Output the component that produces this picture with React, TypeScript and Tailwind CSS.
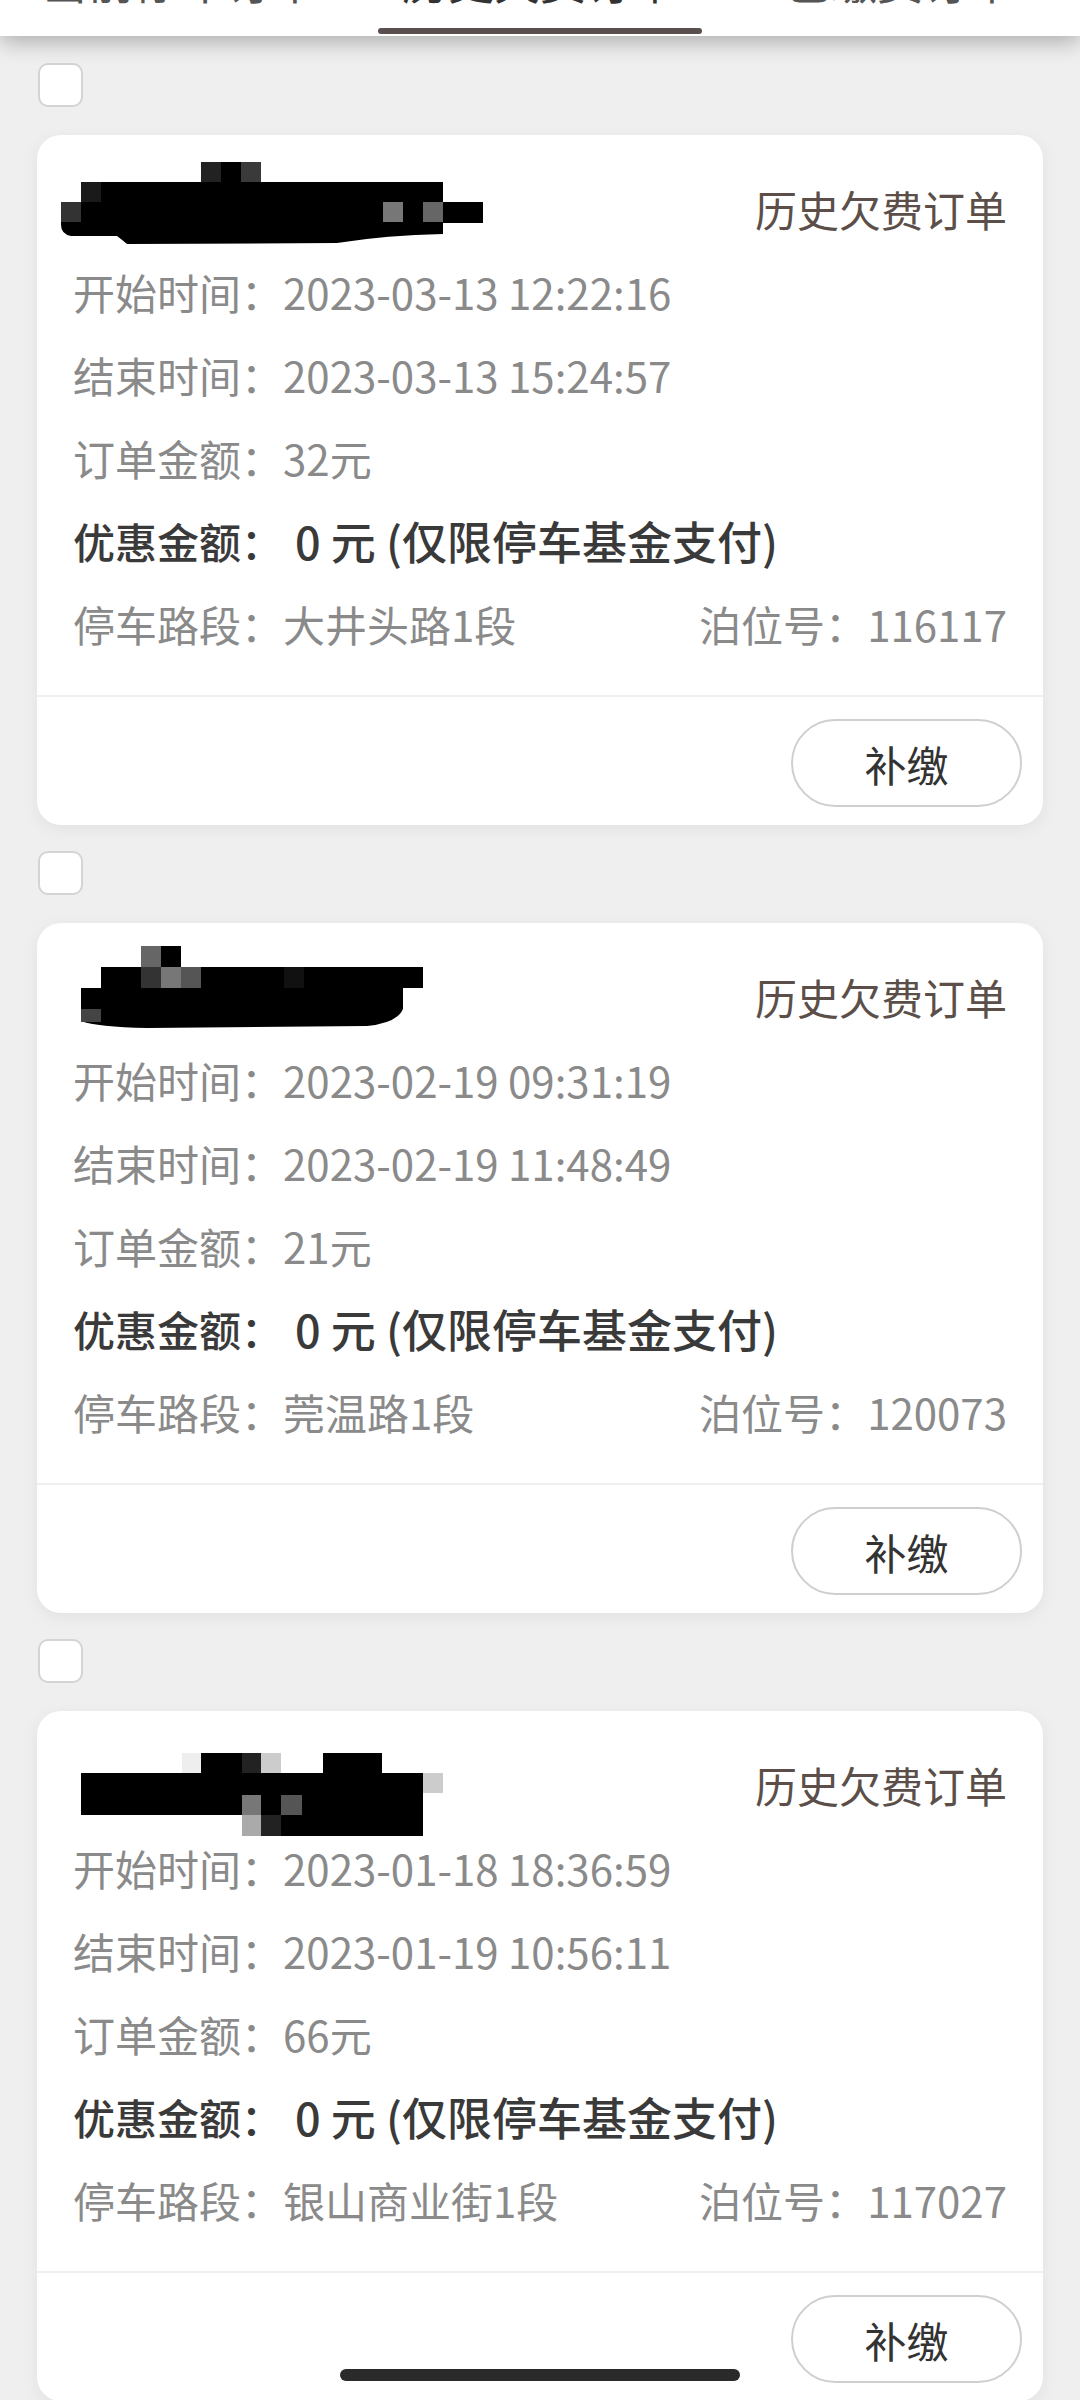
import type { ReactNode } from "react"

type Order = {
  start: string
  end: string
  amount: string
  road: string
  berth: string
  blob: ReactNode
}

const blobOne = (
  <>
    <rect x="164" y="27" width="20" height="20" fill="#222" />
    <rect x="184" y="27" width="20" height="20" fill="#000" />
    <rect x="204" y="27" width="20" height="20" fill="#3a3a3a" />
    <rect x="44" y="47" width="362" height="50" fill="#000" />
    <rect x="44" y="47" width="20" height="20" fill="#1a1a1a" />
    <rect x="24" y="67" width="20" height="20" fill="#333" />
    <path d="M24 87 H44 V97 H406 V99 Q350 100 300 108 L90 109 Q84 104 80 101 L34 101 Q24 99 24 90 Z" fill="#000" />
    <rect x="346" y="67" width="20" height="20" fill="#777" />
    <rect x="386" y="67" width="20" height="20" fill="#666" />
    <rect x="406" y="67" width="40" height="21" fill="#000" />
  </>
)

const blobTwo = (
  <>
    <rect x="104" y="23" width="20" height="21" fill="#666" />
    <rect x="124" y="23" width="20" height="21" fill="#000" />
    <rect x="64" y="44" width="322" height="21" fill="#000" />
    <rect x="104" y="44" width="20" height="21" fill="#333" />
    <rect x="124" y="44" width="20" height="21" fill="#777" />
    <rect x="144" y="44" width="20" height="21" fill="#555" />
    <rect x="247" y="44" width="20" height="21" fill="#111" />
    <rect x="44" y="65" width="322" height="21" fill="#000" />
    <path d="M44 86 H366 Q360 100 330 103 L110 105 Q60 104 44 98 Z" fill="#000" />
    <rect x="44" y="86" width="20" height="13" fill="#444" />
  </>
)

const blobThree = (
  <>
    <rect x="145" y="42" width="19" height="20" fill="#eee" />
    <rect x="164" y="42" width="41" height="20" fill="#000" />
    <rect x="205" y="42" width="19" height="20" fill="#222" />
    <rect x="224" y="42" width="20" height="20" fill="#ccc" />
    <rect x="286" y="42" width="59" height="20" fill="#000" />
    <rect x="44" y="62" width="342" height="42" fill="#000" />
    <rect x="386" y="62" width="20" height="20" fill="#ccc" />
    <rect x="205" y="84" width="19" height="20" fill="#777" />
    <rect x="244" y="84" width="21" height="20" fill="#555" />
    <rect x="205" y="104" width="19" height="21" fill="#aaa" />
    <rect x="224" y="104" width="20" height="21" fill="#222" />
    <rect x="244" y="104" width="142" height="21" fill="#000" />
  </>
)

const orders: Order[] = [
  { start: "2023-03-13 12:22:16", end: "2023-03-13 15:24:57", amount: "32元", road: "大井头路1段", berth: "116117", blob: blobOne },
  { start: "2023-02-19 09:31:19", end: "2023-02-19 11:48:49", amount: "21元", road: "莞温路1段", berth: "120073", blob: blobTwo },
  { start: "2023-01-18 18:36:59", end: "2023-01-19 10:56:11", amount: "66元", road: "银山商业街1段", berth: "117027", blob: blobThree },
]

const Row = ({ children, className = "" }: { children: ReactNode; className?: string }) => (
  <div className={`h-[83px] flex items-center ${className}`}>{children}</div>
)

const OrderCard = ({ order }: { order: Order }) => (
  <div className="relative bg-white rounded-[24px] shadow-[0_4px_18px_rgba(0,0,0,0.06)]">
    <svg className="absolute left-0 top-0" width="460" height="130" viewBox="0 0 460 130">
      {order.blob}
    </svg>
    <div className="px-[36px] pt-[32px] pb-[30px] text-[42px] text-[#8a8a8a]">
      <Row className="justify-end">
        <span className="text-[#5c4f49]">历史欠费订单</span>
      </Row>
      <Row>开始时间：{order.start}</Row>
      <Row>结束时间：{order.end}</Row>
      <Row>订单金额：{order.amount}</Row>
      <Row className="text-[#3a3a3a] font-medium">
        优惠金额：<span className="ml-[12px] text-[45px]">0 元 (仅限停车基金支付)</span>
      </Row>
      <Row className="justify-between">
        <span>停车路段：{order.road}</span>
        <span>泊位号：{order.berth}</span>
      </Row>
    </div>
    <div className="h-[2px] bg-[#efefef]" />
    <div className="flex justify-end pt-[22px] pb-[18px] pr-[21px]">
      <button className="w-[231px] h-[88px] rounded-full border-2 border-[#cfcfcf] text-[42px] text-[#333] bg-white">
        补缴
      </button>
    </div>
  </div>
)

const App = () => {
  return (
    <div className="relative w-[1080px] h-[2400px] overflow-hidden bg-[#efefef] font-['Noto_Sans_CJK_SC','Noto_Sans',sans-serif]">
      <div className="relative z-10 h-[36px] bg-white shadow-[0_6px_22px_rgba(0,0,0,0.28)] flex overflow-hidden">
        {["当前停车订单", "历史欠费订单", "已缴费订单"].map((t, i) => (
          <div key={t} className="relative w-[360px] flex justify-center">
            <span className={`mt-[-44px] text-[46px] leading-none ${i === 1 ? "text-[#333]" : "text-[#555]"}`}>{t}</span>
            {i === 1 && <div className="absolute left-[18px] top-[28px] w-[324px] h-[6px] rounded-sm bg-[#5a4f4f]" />}
          </div>
        ))}
      </div>

      <div className="px-[37px] pt-[27px]">
        {orders.map((o) => (
          <div key={o.start} className="mb-[26px]">
            <div className="ml-[1px] mb-[28px] w-[45px] h-[44px] rounded-[10px] border-2 border-[#d4d4d4] bg-white" />
            <OrderCard order={o} />
          </div>
        ))}
      </div>

      <div className="absolute left-[340px] top-[2369px] w-[400px] h-[12px] rounded-full bg-[#2a2a2a]" />
    </div>
  )
}

export default App
